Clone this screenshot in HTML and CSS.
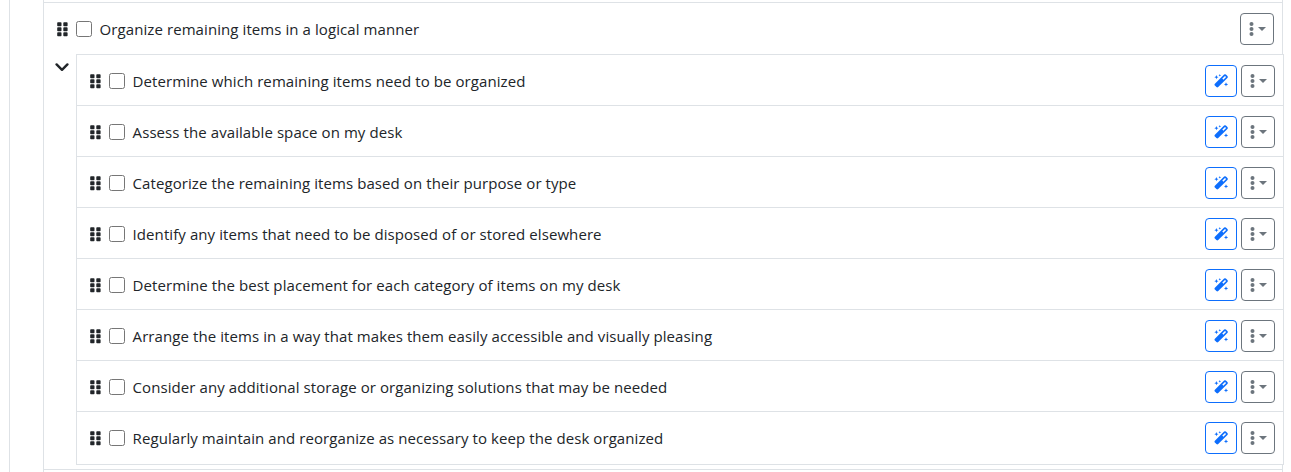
FILE: index.html
```
<!DOCTYPE html>
<html lang="en">
<head>
    <meta charset="UTF-8">
    <meta name="viewport" content="width=device-width, initial-scale=1.0">
    <title>Tasks</title>
    <link rel="stylesheet" href="styles.css">
</head>
<body>
    <!-- shared icons -->
    <svg class="sprite" width="0" height="0">
        <symbol id="grip" viewBox="0 0 11 15">
            <rect x="0.2" y="0.2" width="4.3" height="4.1" rx="0.8"/>
            <rect x="6.3" y="0.2" width="4.3" height="4.1" rx="0.8"/>
            <rect x="0.2" y="5.2" width="4.3" height="4.1" rx="0.8"/>
            <rect x="6.3" y="5.2" width="4.3" height="4.1" rx="0.8"/>
            <rect x="0.2" y="10.2" width="4.3" height="4.1" rx="0.8"/>
            <rect x="6.3" y="10.2" width="4.3" height="4.1" rx="0.8"/>
        </symbol>
        <symbol id="wand" viewBox="0 0 14 14">
            <path fill-rule="evenodd" d="M10.1 0.6a1.3 1.3 0 0 1 1.8 0l1.5 1.5a1.3 1.3 0 0 1 0 1.8L4.2 13.1a1.3 1.3 0 0 1-1.8 0L.9 11.6a1.3 1.3 0 0 1 0-1.8zM11 1.9L8.3 4.6l1.1 1.1 2.7-2.7z"/>
            <path d="M2.4 1.1l.6 1.5 1.5.6-1.5.6-.6 1.5-.6-1.5-1.5-.6 1.5-.6zM5.8 0l.4.9.9.4-.9.4-.4.9-.4-.9-.9-.4.9-.4zM12 8.3l.6 1.5 1.5.6-1.5.6-.6 1.5-.6-1.5-1.5-.6 1.5-.6z"/>
        </symbol>
        <symbol id="dots" viewBox="0 0 5 14">
            <circle cx="2.5" cy="2.1" r="2"/>
            <circle cx="2.5" cy="7" r="2"/>
            <circle cx="2.5" cy="11.9" r="2"/>
        </symbol>
    </svg>
    <div class="panel">
        <ul class="task-list">
            <li class="task">
                <div class="task-row">
                    <svg class="grip"><use href="#grip"/></svg>
                    <input type="checkbox" class="check">
                    <span class="title">Organize remaining items in a logical manner</span>
                    <button class="btn btn-menu"><svg class="dots"><use href="#dots"/></svg></button>
                </div>
                <div class="children">
                    <svg class="chevron" viewBox="0 0 14 9"><path d="M1.6 1.4L7 6.8l5.4-5.4"/></svg>
                    <ul class="subtasks">
                        <li class="task-row">
                            <svg class="grip"><use href="#grip"/></svg>
                            <input type="checkbox" class="check">
                            <span class="title">Determine which remaining items need to be organized</span>
                            <button class="btn btn-magic"><svg class="wand"><use href="#wand"/></svg></button>
                            <button class="btn btn-menu"><svg class="dots"><use href="#dots"/></svg></button>
                        </li>
                        <li class="task-row">
                            <svg class="grip"><use href="#grip"/></svg>
                            <input type="checkbox" class="check">
                            <span class="title">Assess the available space on my desk</span>
                            <button class="btn btn-magic"><svg class="wand"><use href="#wand"/></svg></button>
                            <button class="btn btn-menu"><svg class="dots"><use href="#dots"/></svg></button>
                        </li>
                        <li class="task-row">
                            <svg class="grip"><use href="#grip"/></svg>
                            <input type="checkbox" class="check">
                            <span class="title">Categorize the remaining items based on their purpose or type</span>
                            <button class="btn btn-magic"><svg class="wand"><use href="#wand"/></svg></button>
                            <button class="btn btn-menu"><svg class="dots"><use href="#dots"/></svg></button>
                        </li>
                        <li class="task-row">
                            <svg class="grip"><use href="#grip"/></svg>
                            <input type="checkbox" class="check">
                            <span class="title">Identify any items that need to be disposed of or stored elsewhere</span>
                            <button class="btn btn-magic"><svg class="wand"><use href="#wand"/></svg></button>
                            <button class="btn btn-menu"><svg class="dots"><use href="#dots"/></svg></button>
                        </li>
                        <li class="task-row">
                            <svg class="grip"><use href="#grip"/></svg>
                            <input type="checkbox" class="check">
                            <span class="title">Determine the best placement for each category of items on my desk</span>
                            <button class="btn btn-magic"><svg class="wand"><use href="#wand"/></svg></button>
                            <button class="btn btn-menu"><svg class="dots"><use href="#dots"/></svg></button>
                        </li>
                        <li class="task-row">
                            <svg class="grip"><use href="#grip"/></svg>
                            <input type="checkbox" class="check">
                            <span class="title">Arrange the items in a way that makes them easily accessible and visually pleasing</span>
                            <button class="btn btn-magic"><svg class="wand"><use href="#wand"/></svg></button>
                            <button class="btn btn-menu"><svg class="dots"><use href="#dots"/></svg></button>
                        </li>
                        <li class="task-row">
                            <svg class="grip"><use href="#grip"/></svg>
                            <input type="checkbox" class="check">
                            <span class="title">Consider any additional storage or organizing solutions that may be needed</span>
                            <button class="btn btn-magic"><svg class="wand"><use href="#wand"/></svg></button>
                            <button class="btn btn-menu"><svg class="dots"><use href="#dots"/></svg></button>
                        </li>
                        <li class="task-row">
                            <svg class="grip"><use href="#grip"/></svg>
                            <input type="checkbox" class="check">
                            <span class="title">Regularly maintain and reorganize as necessary to keep the desk organized</span>
                            <button class="btn btn-magic"><svg class="wand"><use href="#wand"/></svg></button>
                            <button class="btn btn-menu"><svg class="dots"><use href="#dots"/></svg></button>
                        </li>
                    </ul>
                </div>
            </li>
            <li class="task"></li>
        </ul>
    </div>
</body>
</html>
```

FILE: styles.css
```
* {
    margin: 0;
    padding: 0;
    box-sizing: border-box;
}

body {
    height: 472px;
    overflow: hidden;
    background: #fff;
    color: #212529;
    font-family: "Segoe UI", "Open Sans", sans-serif;
    font-size: 15px;
}

ul {
    list-style: none;
}

.sprite {
    position: absolute;
}

.panel {
    height: 472px;
    margin-left: 9px;
    padding-left: 33px;
    border-left: 1px solid #dee2e6;
}

.task-list {
    width: 1240px;
    height: 472px;
    border: 1px solid #dee2e6;
    border-width: 0 1px;
    padding-top: 2px;
}

.task {
    border-top: 1px solid #dee2e6;
}

.task-row {
    display: flex;
    align-items: center;
    height: 51px;
    padding: 10px 8px 9px 13px;
}

.children {
    display: flex;
    padding-bottom: 4px;
    margin-right: -2px;
}

.chevron {
    width: 14px;
    height: 9px;
    margin: 9px 7px 0 11px;
    fill: none;
    stroke: #212529;
    stroke-width: 2.4;
    stroke-linecap: round;
    stroke-linejoin: round;
}

.subtasks {
    flex: 1;
    border: 1px solid #dee2e6;
    background: #fff;
}

.subtasks .task-row {
    padding-bottom: 8px;
    border-bottom: 1px solid #dee2e6;
}

.subtasks .task-row:last-child {
    height: 52px;
    padding-bottom: 10px;
    border-bottom: none;
}

.grip {
    width: 11px;
    height: 15px;
    fill: #212529;
}

.check {
    appearance: none;
    width: 16px;
    height: 16px;
    margin: 0 7.6px 0 8px;
    border: 1px solid #767676;
    border-radius: 2.5px;
    background: #fff;
}

.title {
    flex: 1;
    line-height: 24px;
    letter-spacing: 0.08px;
    font-weight: 380;
    white-space: nowrap;
}

.btn {
    display: flex;
    align-items: center;
    justify-content: center;
    height: 32px;
    border: 1px solid #6c757d;
    border-radius: 4px;
    background: #fff;
    color: #6c757d;
    fill: currentColor;
}

.btn-magic {
    width: 32px;
    margin-right: 4px;
    border-color: #0d6efd;
    color: #0d6efd;
}

.btn-menu {
    width: 34px;
}

.btn-menu::after {
    content: "";
    margin-left: 4px;
    border-top: 4px solid;
    border-right: 4px solid transparent;
    border-left: 4px solid transparent;
}

.wand {
    width: 14px;
    height: 14px;
}

.dots {
    width: 5px;
    height: 14px;
}
```
